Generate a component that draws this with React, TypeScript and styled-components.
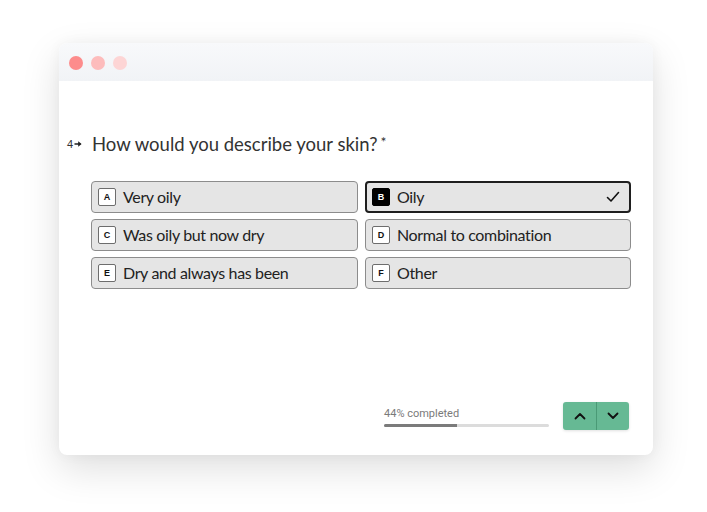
import React from "react";
import styled, { createGlobalStyle } from "styled-components";

const GlobalStyle = createGlobalStyle`
  html, body {
    margin: 0;
    padding: 0;
    background: #ffffff;
  }
  body {
    font-family: Lato, "Open Sans", sans-serif;
  }
`;

const Page = styled.div`
  width: 707px;
  height: 512px;
  padding: 43px 0 0 59px;
  box-sizing: border-box;
`;

const Window = styled.div`
  width: 594px;
  height: 412px;
  border-radius: 8px;
  background: #ffffff;
  box-shadow: 0 14px 38px rgba(0, 0, 0, 0.13), 0 0 14px rgba(0, 0, 0, 0.04);
  display: flex;
  flex-direction: column;
  overflow: hidden;
`;

const TitleBar = styled.div`
  height: 38px;
  flex-shrink: 0;
  background: linear-gradient(#f8f9fb, #f1f3f6);
  display: flex;
  align-items: center;
  gap: 8px;
  padding: 2px 0 0 10px;
  box-sizing: border-box;
`;

const Dot = styled.span<{ $color: string }>`
  width: 14px;
  height: 14px;
  border-radius: 50%;
  background: ${(p) => p.$color};
`;

const Content = styled.div`
  flex: 1;
  display: flex;
  flex-direction: column;
  padding: 51px 24px 25px 8px;
`;

const Question = styled.div`
  display: flex;
  align-items: center;
  height: 24px;
  color: #333;
`;

const QNumber = styled.span`
  width: 25px;
  display: flex;
  align-items: center;
  gap: 1px;
  font-family: "Liberation Sans", Arial, sans-serif;
  font-size: 11px;
  color: #333;
`;

const QText = styled.span`
  font-size: 18.5px;
`;

const Required = styled.span`
  font-size: 14px;
  margin-left: 3px;
  position: relative;
  top: -3px;
`;

const Options = styled.div`
  display: grid;
  grid-template-columns: 267px 266px;
  grid-auto-rows: 32px;
  column-gap: 7px;
  row-gap: 6px;
  margin: 25px 0 0 24px;
`;

const Option = styled.div<{ $selected?: boolean }>`
  display: flex;
  align-items: center;
  gap: 7px;
  padding: 0 9px 0 ${(p) => (p.$selected ? "5px" : "6px")};
  border: ${(p) => (p.$selected ? "2px solid #1f1f1f" : "1px solid #8c8c8c")};
  border-radius: 4px;
  background: #e5e5e5;
  color: #222;
  font-size: 16px;
  letter-spacing: -0.35px;
`;

const Key = styled.span<{ $selected?: boolean }>`
  width: 18px;
  height: 18px;
  box-sizing: border-box;
  display: flex;
  align-items: center;
  justify-content: center;
  border-radius: 2px;
  border: 1px solid ${(p) => (p.$selected ? "#000" : "#6d6d6d")};
  background: ${(p) => (p.$selected ? "#000" : "#fff")};
  color: ${(p) => (p.$selected ? "#fff" : "#111")};
  font-family: "Liberation Sans", Arial, sans-serif;
  font-weight: 700;
  font-size: 9px;
  letter-spacing: 0;
`;

const Label = styled.span`
  flex: 1;
  margin-top: -1px;
`;

const Footer = styled.div`
  margin-top: auto;
  display: flex;
  justify-content: flex-end;
  align-items: center;
  gap: 14px;
`;

const Progress = styled.div`
  width: 165px;
  display: flex;
  flex-direction: column;
  gap: 4px;
  padding-top: 2px;
`;

const ProgressText = styled.span`
  font-family: Roboto, "Liberation Sans", sans-serif;
  font-size: 11px;
  line-height: 13px;
  color: #7a7a7a;
`;

const Track = styled.div`
  height: 3px;
  border-radius: 2px;
  background: #dcdcdc;
  overflow: hidden;
`;

const Fill = styled.div`
  height: 100%;
  background: #7b7b7b;
`;

const NavGroup = styled.div`
  display: flex;
  height: 28px;
  border-radius: 3px;
  overflow: hidden;
  background: #66b994;
  box-shadow: 0 1px 3px rgba(0, 0, 0, 0.12);
`;

const NavButton = styled.button`
  width: 33px;
  height: 28px;
  border: none;
  padding: 0;
  background: transparent;
  display: flex;
  align-items: center;
  justify-content: center;
  cursor: pointer;
  & + & {
    border-left: 1px solid #4a9a76;
  }
`;

const Chevron = ({ up }: { up?: boolean }) => (
  <svg width="12" height="8" viewBox="0 0 12 8" fill="none">
    <path
      d={up ? "M1.5 6.5 L6 2 L10.5 6.5" : "M1.5 1.5 L6 6 L10.5 1.5"}
      stroke="#111"
      strokeWidth="1.8"
      strokeLinecap="round"
      strokeLinejoin="round"
    />
  </svg>
);

const choices = [
  { key: "A", label: "Very oily" },
  { key: "B", label: "Oily", selected: true },
  { key: "C", label: "Was oily but now dry" },
  { key: "D", label: "Normal to combination" },
  { key: "E", label: "Dry and always has been" },
  { key: "F", label: "Other" },
];

const App = () => {
  const progress = 44;
  return (
    <Page>
      <GlobalStyle />
      <Window>
        <TitleBar>
          <Dot $color="#fd8c8c" />
          <Dot $color="#fdbcbc" />
          <Dot $color="#fdd5d5" />
        </TitleBar>
        <Content>
          <Question>
            <QNumber>
              4
              <svg width="9" height="8" viewBox="0 0 9 8">
                <path d="M0.5 4 H6.5" stroke="#222" strokeWidth="1.3" />
                <path d="M4.2 1.3 L7.6 4 L4.2 6.7 Z" fill="#222" />
              </svg>
            </QNumber>
            <QText>How would you describe your skin?</QText>
            <Required>*</Required>
          </Question>
          <Options>
            {choices.map((c) => (
              <Option key={c.key} $selected={c.selected}>
                <Key $selected={c.selected}>{c.key}</Key>
                <Label>{c.label}</Label>
                {c.selected && (
                  <svg width="14" height="12" viewBox="0 0 14 12" fill="none">
                    <path
                      d="M1.5 6.5 L5 10 L12.5 1.5"
                      stroke="#111"
                      strokeWidth="1.6"
                      strokeLinecap="round"
                      strokeLinejoin="round"
                    />
                  </svg>
                )}
              </Option>
            ))}
          </Options>
          <Footer>
            <Progress>
              <ProgressText>{progress}% completed</ProgressText>
              <Track>
                <Fill style={{ width: `${progress}%` }} />
              </Track>
            </Progress>
            <NavGroup>
              <NavButton aria-label="Previous">
                <Chevron up />
              </NavButton>
              <NavButton aria-label="Next">
                <Chevron />
              </NavButton>
            </NavGroup>
          </Footer>
        </Content>
      </Window>
    </Page>
  );
};

export default App;
